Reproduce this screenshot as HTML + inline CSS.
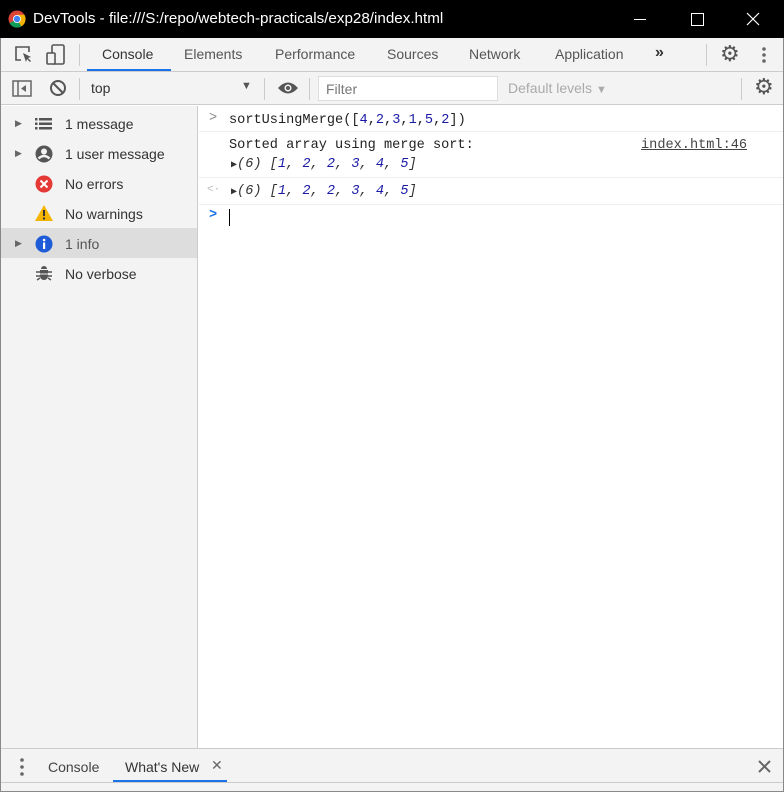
<!DOCTYPE html>
<html><head><meta charset="utf-8"><style>
*{margin:0;padding:0;box-sizing:border-box}
body{width:784px;height:792px;position:relative;overflow:hidden;font-family:"Liberation Sans",sans-serif;font-size:14px;color:#333;background:#fff}
.a{position:absolute;white-space:nowrap}
.mono{font-family:"Liberation Mono",monospace;font-size:13.6px}
</style></head><body>
<div class="a" style="left:0;top:0;width:784px;height:38px;background:#000;color:#fff;font-size:15.2px">
 <svg class="a" style="left:8px;top:10px" width="18" height="18" viewBox="0 0 18 18"><circle cx="9" cy="9" r="8.5" fill="#db4437"/><path d="M9 9 L1.6 13.3 A8.5 8.5 0 0 0 13.3 16.4Z" fill="#0f9d58"/><path d="M9 9 L13.3 16.4 A8.5 8.5 0 0 0 16.4 4.8 L9 4.8Z" fill="#f4b400"/><circle cx="9" cy="9" r="4" fill="#fff"/><circle cx="9" cy="9" r="3.2" fill="#4285f4"/></svg>
 <div class="a" style="left:33px;top:10px">DevTools - file:///S:/repo/webtech-practicals/exp28/index.html</div>
 <div class="a" style="left:634px;top:19px;width:12px;height:1px;background:#fff"></div>
 <div class="a" style="left:691px;top:13px;width:13px;height:13px;border:1px solid #fff"></div>
 <svg class="a" style="left:746px;top:12px" width="14" height="14"><path d="M1 1L13 13M13 1L1 13" stroke="#fff" stroke-width="1.2"/></svg>
</div>
<div class="a" style="left:0;top:38px;width:784px;height:754px;border-left:1px solid #888;border-right:1px solid #888;border-bottom:1px solid #888"></div>
<div class="a" style="left:1px;top:38px;width:782px;height:34px;background:#f3f3f3;border-bottom:1px solid #ccc">
 <svg class="a" style="left:13px;top:7px" width="20" height="20"><path d="M7 15H2V2h13v5" fill="none" stroke="#555" stroke-width="1.6"/><path d="M9 8l8 4-3 1 3 3-1 1-3-3-1 3z" fill="#555"/></svg>
 <svg class="a" style="left:45px;top:6px" width="20" height="22"><rect x="6" y="1" width="12" height="19" rx="1.5" fill="none" stroke="#555" stroke-width="1.6"/><rect x="1" y="9" width="8" height="11" rx="1" fill="#f3f3f3" stroke="#555" stroke-width="1.6"/></svg>
 <div class="a" style="left:78px;top:6px;width:1px;height:22px;background:#ccc"></div>
 <div class="a" style="left:101px;top:8px;color:#333">Console</div>
 <div class="a" style="left:86px;top:31px;width:84px;height:2px;background:#1a73e8"></div>
 <div class="a" style="left:183px;top:8px;color:#555">Elements</div>
 <div class="a" style="left:274px;top:8px;color:#555">Performance</div>
 <div class="a" style="left:386px;top:8px;color:#555">Sources</div>
 <div class="a" style="left:468px;top:8px;color:#555">Network</div>
 <div class="a" style="left:554px;top:8px;color:#555">Application</div>
 <div class="a" style="left:654px;top:6px;color:#333;font-size:16px;font-weight:bold">»</div>
 <div class="a" style="left:705px;top:6px;width:1px;height:22px;background:#ccc"></div>
 <div class="a" style="left:719px;top:3px;color:#555;font-size:22px">⚙</div>
 <svg class="a" style="left:761px;top:8px" width="4" height="18"><circle cx="2" cy="3" r="1.8" fill="#666"/><circle cx="2" cy="9" r="1.8" fill="#666"/><circle cx="2" cy="15" r="1.8" fill="#666"/></svg>
</div>
<div class="a" style="left:1px;top:72px;width:782px;height:33px;background:#f3f3f3;border-bottom:1px solid #ccc">
 <svg class="a" style="left:11px;top:8px" width="20" height="18"><rect x="1" y="1" width="18" height="15" fill="none" stroke="#666" stroke-width="1.5"/><line x1="6" y1="1" x2="6" y2="16" stroke="#666" stroke-width="1.5"/><path d="M14 5v7l-5-3.5z" fill="#666"/></svg>
 <svg class="a" style="left:48px;top:7px" width="18" height="18"><circle cx="9" cy="9" r="7" fill="none" stroke="#555" stroke-width="2"/><line x1="4" y1="4" x2="14" y2="14" stroke="#555" stroke-width="2"/></svg>
 <div class="a" style="left:78px;top:6px;width:1px;height:22px;background:#ccc"></div>
 <div class="a" style="left:90px;top:8px;color:#333">top</div>
 <div class="a" style="left:240px;top:8px;color:#555;font-size:11px">▼</div>
 <div class="a" style="left:263px;top:6px;width:1px;height:22px;background:#ccc"></div>
 <svg class="a" style="left:276px;top:8px" width="22" height="16"><path d="M1 8Q11-3 21 8Q11 19 1 8z" fill="#555"/><circle cx="11" cy="8" r="3.5" fill="#f3f3f3"/><circle cx="11" cy="8" r="2" fill="#555"/></svg>
 <div class="a" style="left:308px;top:6px;width:1px;height:22px;background:#ccc"></div>
 <div class="a" style="left:317px;top:4px;width:180px;height:25px;background:#fff;border:1px solid #ddd;color:#777;padding:4px 7px">Filter</div>
 <div class="a" style="left:507px;top:8px;color:#aaa">Default levels <span style="font-size:11px">▼</span></div>
 <div class="a" style="left:740px;top:6px;width:1px;height:22px;background:#ccc"></div>
 <div class="a" style="left:753px;top:2px;color:#555;font-size:22px">⚙</div>
</div>
<div class="a" style="left:1px;top:106px;width:197px;height:642px;background:#f3f3f3;border-right:1px solid #ccc"></div>
<div class="a" style="left:1px;top:228px;width:196px;height:30px;background:#ddd"></div>
<div class="a" style="font-size:14px;color:#333;left:0;top:0">
 <div class="a" style="left:15px;top:118px;font-size:9px;color:#666">▶</div>
 <svg class="a" style="left:35px;top:117px" width="18" height="14"><g fill="#555"><rect x="0" y="1" width="2.5" height="2.5"/><rect x="4" y="1" width="13" height="2.5"/><rect x="0" y="5.5" width="2.5" height="2.5"/><rect x="4" y="5.5" width="13" height="2.5"/><rect x="0" y="10" width="2.5" height="2.5"/><rect x="4" y="10" width="13" height="2.5"/></g></svg>
 <div class="a" style="left:65px;top:116px">1 message</div>
 <div class="a" style="left:15px;top:148px;font-size:9px;color:#666">▶</div>
 <svg class="a" style="left:35px;top:145px" width="18" height="18"><circle cx="9" cy="9" r="8.5" fill="#555"/><circle cx="9" cy="6.5" r="3" fill="#f3f3f3"/><path d="M3.5 13.5Q9 8.5 14.5 13.5" stroke="#f3f3f3" stroke-width="2.5" fill="none"/></svg>
 <div class="a" style="left:65px;top:146px">1 user message</div>
 <svg class="a" style="left:35px;top:175px" width="18" height="18"><circle cx="9" cy="9" r="8.5" fill="#e53935"/><path d="M5.5 5.5l7 7M12.5 5.5l-7 7" stroke="#fff" stroke-width="2"/></svg>
 <div class="a" style="left:65px;top:176px">No errors</div>
 <svg class="a" style="left:35px;top:205px" width="18" height="16"><path d="M9 0L18 16H0z" fill="#f4b400"/><rect x="8" y="5" width="2" height="6" fill="#333"/><rect x="8" y="12.5" width="2" height="2" fill="#333"/></svg>
 <div class="a" style="left:65px;top:206px">No warnings</div>
 <div class="a" style="left:15px;top:238px;font-size:9px;color:#666">▶</div>
 <svg class="a" style="left:35px;top:235px" width="18" height="18"><circle cx="9" cy="9" r="8.5" fill="#1e5bd6"/><rect x="8" y="7.5" width="2.2" height="6.5" fill="#fff"/><circle cx="9.1" cy="5" r="1.3" fill="#fff"/></svg>
 <div class="a" style="left:65px;top:236px;color:#555">1 info</div>
 <svg class="a" style="left:36px;top:265px" width="16" height="17"><path d="M4 5h8v6a4 4 0 0 1-8 0z" fill="#555"/><path d="M5 4a3 3 0 0 1 6 0z" fill="#555"/><path d="M0 7h4M12 7h4M0 11h4M12 11h4M1 15l3-2M15 15l-3-2" stroke="#555" stroke-width="1.5"/><line x1="4" y1="9" x2="12" y2="9" stroke="#f3f3f3"/></svg>
 <div class="a" style="left:65px;top:266px">No verbose</div>
</div>
<div class="a" style="left:199px;top:131px;width:584px;height:1px;background:#eee"></div>
<div class="a" style="left:199px;top:177px;width:584px;height:1px;background:#eee"></div>
<div class="a" style="left:199px;top:204px;width:584px;height:1px;background:#eee"></div>
<div class="a mono" style="left:209px;top:111px;color:#888">&gt;</div>
<div class="a mono" style="left:229px;top:113px;color:#222">sortUsingMerge([<span style="color:#1a1aa6">4</span>,<span style="color:#1a1aa6">2</span>,<span style="color:#1a1aa6">3</span>,<span style="color:#1a1aa6">1</span>,<span style="color:#1a1aa6">5</span>,<span style="color:#1a1aa6">2</span>])</div>
<div class="a mono" style="left:229px;top:138px;color:#222">Sorted array using merge sort:</div>
<div class="a mono" style="left:641px;top:138px;color:#444;text-decoration:underline">index.html:46</div>
<div class="a mono" style="left:231px;top:157px;color:#333"><span style="font-size:10px;font-style:normal">▶</span><i>(6) [<span style="color:#1a1aa6">1</span>, <span style="color:#1a1aa6">2</span>, <span style="color:#1a1aa6">2</span>, <span style="color:#1a1aa6">3</span>, <span style="color:#1a1aa6">4</span>, <span style="color:#1a1aa6">5</span>]</i></div>
<div class="a mono" style="left:207px;top:184px;color:#bbb;font-size:11px">&lt;·</div>
<div class="a mono" style="left:231px;top:184px;color:#333"><span style="font-size:10px">▶</span><i>(6) [<span style="color:#1a1aa6">1</span>, <span style="color:#1a1aa6">2</span>, <span style="color:#1a1aa6">2</span>, <span style="color:#1a1aa6">3</span>, <span style="color:#1a1aa6">4</span>, <span style="color:#1a1aa6">5</span>]</i></div>
<div class="a mono" style="left:209px;top:208px;color:#1a73e8;font-weight:bold">&gt;</div>
<div class="a" style="left:229px;top:209px;width:1px;height:17px;background:#000"></div>
<div class="a" style="left:1px;top:748px;width:782px;height:35px;background:#f3f3f3;border-top:1px solid #ccc;border-bottom:1px solid #ccc">
 <svg class="a" style="left:19px;top:9px" width="4" height="18"><circle cx="2" cy="2" r="1.8" fill="#666"/><circle cx="2" cy="9" r="1.8" fill="#666"/><circle cx="2" cy="16" r="1.8" fill="#666"/></svg>
 <div class="a" style="left:47px;top:10px;color:#444">Console</div>
 <div class="a" style="left:124px;top:10px;color:#333">What's New</div>
 <div class="a" style="left:210px;top:8px;color:#666;font-size:14px">✕</div>
 <div class="a" style="left:112px;top:31px;width:114px;height:2px;background:#1a73e8"></div>
 <svg class="a" style="left:757px;top:11px" width="13" height="13"><path d="M1 1L12 12M12 1L1 12" stroke="#666" stroke-width="2"/></svg>
</div>
<div class="a" style="left:1px;top:783px;width:782px;height:8px;background:#f3f3f3"></div>
</body></html>
